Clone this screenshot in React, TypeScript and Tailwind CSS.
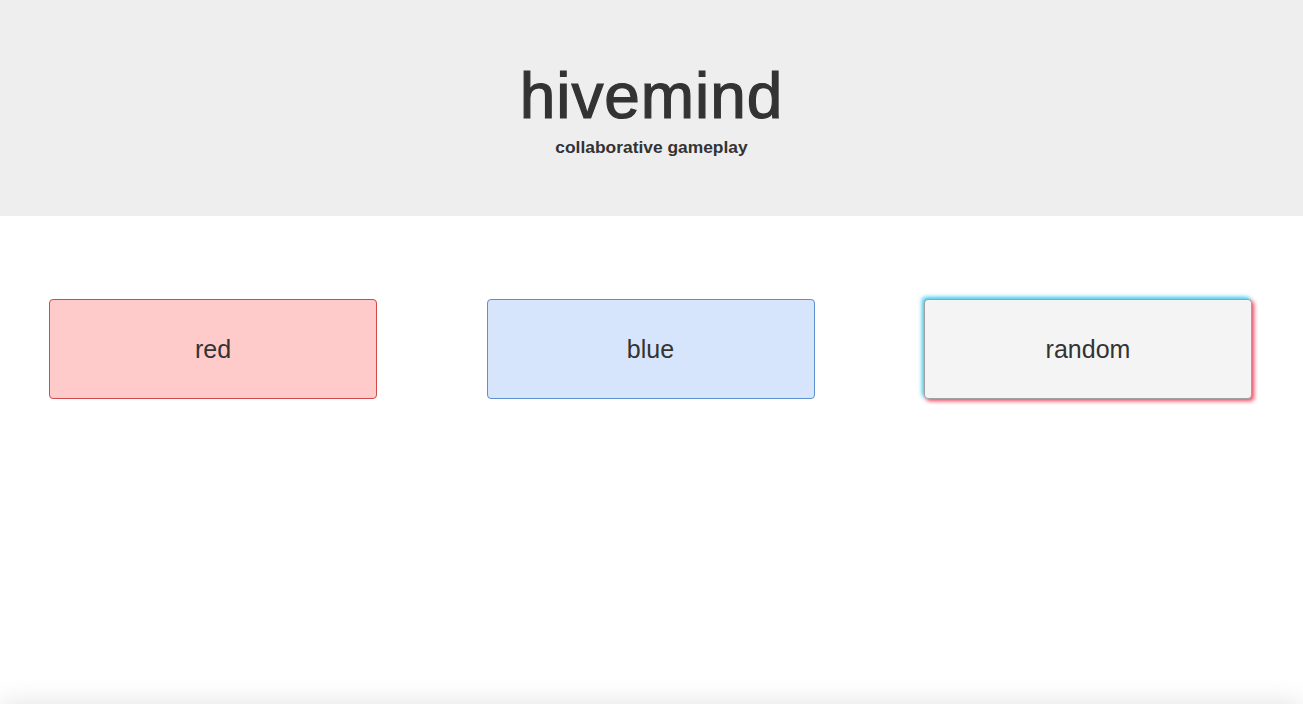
export default function App() {
  return (
    <div
      className="min-h-screen bg-white text-[#333]"
      style={{ fontFamily: '"Liberation Sans", Arial, sans-serif' }}
    >
      <header className="h-[216px] bg-[#eeeeee] pt-[64px] text-center">
        <h1 className="text-[64px] leading-none font-normal tracking-[0.9px] [-webkit-text-stroke:1.2px_#333]">
          hivemind
        </h1>
        <p className="mt-[11px] text-[17.4px] leading-none font-bold">collaborative gameplay</p>
      </header>

      <main className="flex justify-between pl-[49px] pr-[51px] pt-[83px]">
        <button className="flex h-[100px] w-[328px] items-center justify-center rounded-[4px] border border-[#d24b4b] bg-[#ffcaca] pt-[2px] text-[25px] text-[#333]">
          red
        </button>
        <button className="flex h-[100px] w-[328px] items-center justify-center rounded-[4px] border border-[#5f8fd3] bg-[#d7e5fc] pt-[2px] text-[25px] text-[#333]">
          blue
        </button>
        <button className="flex h-[100px] w-[328px] items-center justify-center rounded-[4px] border border-[#a0a0a0] bg-[#f4f4f4] pt-[2px] text-[25px] text-[#333] shadow-[-2px_-2px_4px_rgba(40,200,235,0.9),2px_2px_4px_rgba(255,60,85,1)]">
          random
        </button>
      </main>

      <div className="fixed bottom-[-40px] left-0 right-0 h-10 bg-white shadow-[0_0_28px_rgba(0,0,0,0.12)]" />
    </div>
  );
}
